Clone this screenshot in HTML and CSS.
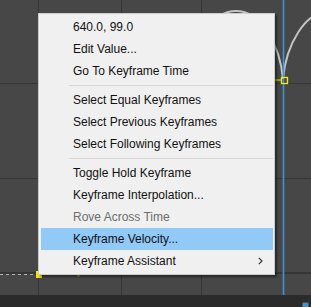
FILE: index.html
```html
<!DOCTYPE html>
<html lang="en">
<head>
    <meta charset="UTF-8">
    <title>Graph Editor</title>
    <link rel="stylesheet" href="styles.css">
</head>
<body>
    <div class="editor">
        <!-- graph area -->
        <svg class="graph" width="311" height="295" viewBox="0 0 311 295">
            <rect x="0" y="0" width="311" height="295" fill="#474747"/>
            <g stroke="#363636" stroke-width="1">
                <line x1="38.5" y1="0" x2="38.5" y2="295"/>
                <line x1="121.5" y1="0" x2="121.5" y2="295"/>
                <line x1="201.5" y1="0" x2="201.5" y2="295"/>
                <line x1="0" y1="83.5" x2="311" y2="83.5"/>
                <line x1="0" y1="178.5" x2="311" y2="178.5"/>
            </g>
            <line x1="0" y1="273" x2="311" y2="273" stroke="#363636" stroke-width="2"/>
            <!-- curve -->
            <path d="M189 79 C192 45 211 11 236 11 C261 11 280 45 283 79 C286 45 305 11 330 11" fill="none" stroke="#c4c4c4" stroke-width="2"/>
            <!-- current time -->
            <line x1="283.5" y1="0" x2="283.5" y2="295" stroke="#3f93dc" stroke-width="1.6"/>
            <line x1="274" y1="80" x2="281" y2="80" stroke="#a39322" stroke-width="2"/>
            <rect x="281.5" y="77.5" width="6" height="6" fill="none" stroke="#ffea00" stroke-width="1.3"/>
            <!-- lower keys -->
            <line x1="0" y1="274.5" x2="36" y2="274.5" stroke="#b4b4b4" stroke-width="1" stroke-dasharray="3 3"/>
            <rect x="36" y="271" width="6" height="7" fill="#f5e600"/>
            <circle cx="78.5" cy="275.5" r="1.3" fill="#9a9028"/>
        </svg>
        <div class="footer">
            <span class="corner-chip"></span>
        </div>

        <!-- context menu -->
        <div class="menu">
            <div class="item">640.0, 99.0</div>
            <div class="item">Edit Value...</div>
            <div class="item">Go To Keyframe Time</div>
            <div class="separator"></div>
            <div class="item">Select Equal Keyframes</div>
            <div class="item">Select Previous Keyframes</div>
            <div class="item">Select Following Keyframes</div>
            <div class="separator"></div>
            <div class="item">Toggle Hold Keyframe</div>
            <div class="item">Keyframe Interpolation...</div>
            <div class="item disabled">Rove Across Time</div>
            <div class="item active">Keyframe Velocity...</div>
            <div class="item submenu">
                <span>Keyframe Assistant</span>
                <svg class="arrow" width="5" height="8" viewBox="0 0 5 8">
                    <polyline points="0.8,0.8 4,4 0.8,7.2" fill="none" stroke="#333" stroke-width="1.2"/>
                </svg>
            </div>
        </div>
    </div>
</body>
</html>
```

FILE: styles.css
```css
body {
    margin: 0;
    background-color: #474747;
    font-family: "Liberation Sans", Arial, sans-serif;
    overflow: hidden;
}
.editor {
    position: relative;
    width: 311px;
    height: 307px;
}
.graph {
    display: block;
}
.footer {
    height: 12px;
    background-color: #2b2b2b;
    display: flex;
    justify-content: flex-end;
    align-items: flex-end;
}
.corner-chip {
    width: 5px;
    height: 4px;
    margin-right: 2px;
    background-color: #3f93dc;
    border: 1px solid #555;
    border-bottom: none;
    border-radius: 2px 2px 0 0;
}
.menu {
    position: absolute;
    left: 38px;
    top: 13px;
    width: 237px;
    box-sizing: border-box;
    padding: 2px 1px 2px 2px;
    background-color: #f0f0f0;
    border: 1px solid #cccccc;
    box-shadow: 2px 2px 2px rgba(0, 0, 0, 0.45);
}
.item {
    height: 22px;
    line-height: 22px;
    padding-left: 32px;
    padding-right: 10px;
    font-size: 12px;
    color: #111;
    white-space: nowrap;
}
.item.disabled {
    color: #6d6d6d;
}
.item.active {
    background-color: #91c9f7;
}
.item.submenu {
    display: flex;
    justify-content: space-between;
    align-items: center;
}
.separator {
    height: 1px;
    margin: 3px 0 3px 28px;
    background-color: #d7d7d7;
}
```
